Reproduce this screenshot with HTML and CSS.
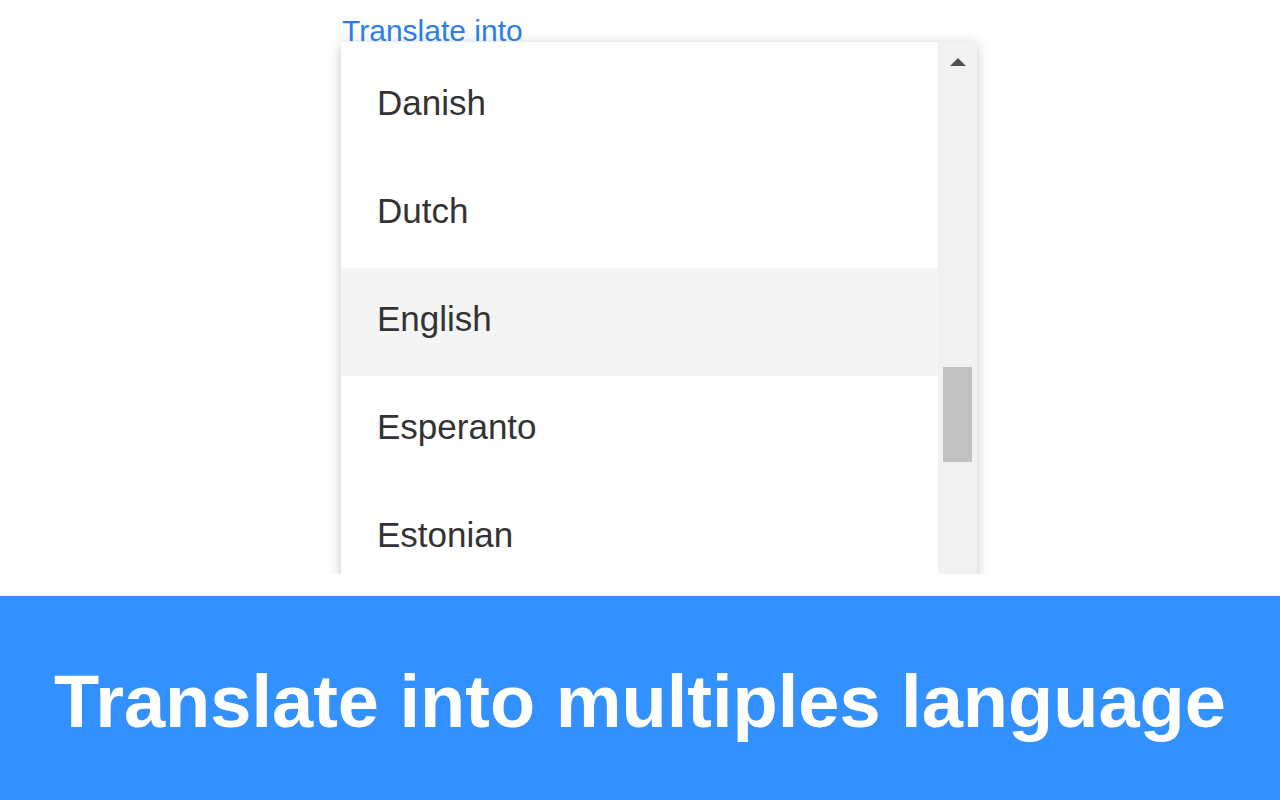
FILE: index.html
```html
<!DOCTYPE html>
<html lang="en">
<head>
<meta charset="utf-8">
<title>Translate into multiples language</title>
<link rel="stylesheet" href="styles.css">
</head>
<body>
<div class="stage">
  <div class="picker">
    <div class="label">Translate into</div>
    <div class="panel">
      <ul class="list">
        <li class="item">Danish</li>
        <li class="item">Dutch</li>
        <li class="item active">English</li>
        <li class="item">Esperanto</li>
        <li class="item">Estonian</li>
      </ul>
      <div class="scrollbar">
        <span class="arrow"></span>
        <span class="thumb"></span>
      </div>
    </div>
  </div>
</div>
<div class="banner">
  <h1 class="headline">Translate into multiples language</h1>
</div>
</body>
</html>
```

FILE: styles.css
```css
html, body {
  margin: 0;
  padding: 0;
  background: #ffffff;
  font-family: "Liberation Sans", Arial, sans-serif;
}

.stage {
  height: 574px;
  overflow: hidden;
}

.picker {
  width: 636px;
  margin-left: 341px;
  padding-top: 19px;
}

.label {
  font-size: 30px;
  line-height: 23px;
  height: 23px;
  color: #2a7ee6;
  padding-left: 1px;
  position: relative;
  z-index: 1;
}

.panel {
  display: flex;
  height: 640px;
  background: #ffffff;
  box-shadow: 0 2px 12px rgba(0, 0, 0, 0.22);
}

.list {
  flex: 1;
  list-style: none;
  margin: 0;
  padding: 10px 0 0 0;
}

.item {
  box-sizing: border-box;
  height: 108px;
  display: flex;
  align-items: center;
  padding-left: 36px;
  padding-bottom: 6px;
  font-size: 35px;
  color: #333333;
}

.item.active {
  background: #f5f5f5;
}

.scrollbar {
  width: 39px;
  background: #f1f1f1;
  display: flex;
  flex-direction: column;
  align-items: center;
}

.arrow {
  margin-top: 16px;
  width: 0;
  height: 0;
  border-left: 8px solid transparent;
  border-right: 8px solid transparent;
  border-bottom: 8px solid #505050;
}

.thumb {
  margin-top: 301px;
  width: 29px;
  height: 95px;
  background: #c1c1c1;
}

.banner {
  margin-top: 22px;
  height: 204px;
  background: #3390ff;
  display: flex;
  align-items: center;
  justify-content: center;
}

.headline {
  margin: 0;
  color: #ffffff;
  font-family: "Liberation Sans", Arial, sans-serif;
  font-weight: bold;
  font-size: 74px;
  line-height: 1;
  padding-top: 8px;
}
```
